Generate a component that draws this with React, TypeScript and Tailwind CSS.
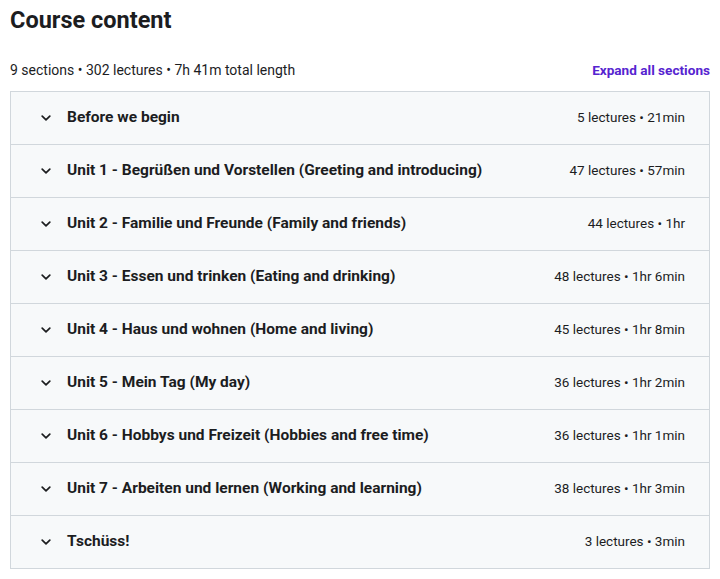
const SECTIONS = [
  { title: 'Before we begin', meta: '5 lectures • 21min' },
  { title: 'Unit 1 - Begrüßen und Vorstellen (Greeting and introducing)', meta: '47 lectures • 57min' },
  { title: 'Unit 2 - Familie und Freunde (Family and friends)', meta: '44 lectures • 1hr' },
  { title: 'Unit 3 - Essen und trinken (Eating and drinking)', meta: '48 lectures • 1hr 6min' },
  { title: 'Unit 4 - Haus und wohnen (Home and living)', meta: '45 lectures • 1hr 8min' },
  { title: 'Unit 5 - Mein Tag (My day)', meta: '36 lectures • 1hr 2min' },
  { title: 'Unit 6 - Hobbys und Freizeit (Hobbies and free time)', meta: '36 lectures • 1hr 1min' },
  { title: 'Unit 7 - Arbeiten und lernen (Working and learning)', meta: '38 lectures • 1hr 3min' },
  { title: 'Tschüss!', meta: '3 lectures • 3min' },
];

function Chevron() {
  return (
    <svg width="10" height="6" viewBox="0 0 10 6" className="mr-[16px] shrink-0" fill="none">
      <path d="M1.2 1.2 L5 4.8 L8.8 1.2" stroke="#1c1d1f" strokeWidth="1.7" strokeLinecap="round" strokeLinejoin="round" />
    </svg>
  );
}

export default function App() {
  return (
    <div className="bg-white px-[10px] pt-[6px] text-[#1c1d1f] font-['Roboto',sans-serif]">
      <h2 className="text-[23.5px] leading-[1.2] font-bold">Course content</h2>

      {/* Summary */}
      <div className="mt-[27px] mb-[10px] flex items-center justify-between text-[14px] leading-[1.4]">
        <span>9 sections • 302 lectures • 7h 41m total length</span>
        <button className="text-[13.6px] font-bold text-[#5624d0]">Expand all sections</button>
      </div>

      {/* Sections */}
      <div className="border border-[#d1d7dc]">
        {SECTIONS.map((s, i) => (
          <div
            key={s.title}
            className={
              'box-content flex h-[52px] items-center bg-[#f7f9fa] pl-[30px] pr-[24px] ' +
              (i > 0 ? 'border-t border-[#d1d7dc]' : '')
            }
          >
            <Chevron />
            <span className="flex-1 text-[15.5px] font-bold leading-[1.2]">{s.title}</span>
            <span className="text-[13.5px] leading-[1.4]">{s.meta}</span>
          </div>
        ))}
      </div>
    </div>
  );
}
